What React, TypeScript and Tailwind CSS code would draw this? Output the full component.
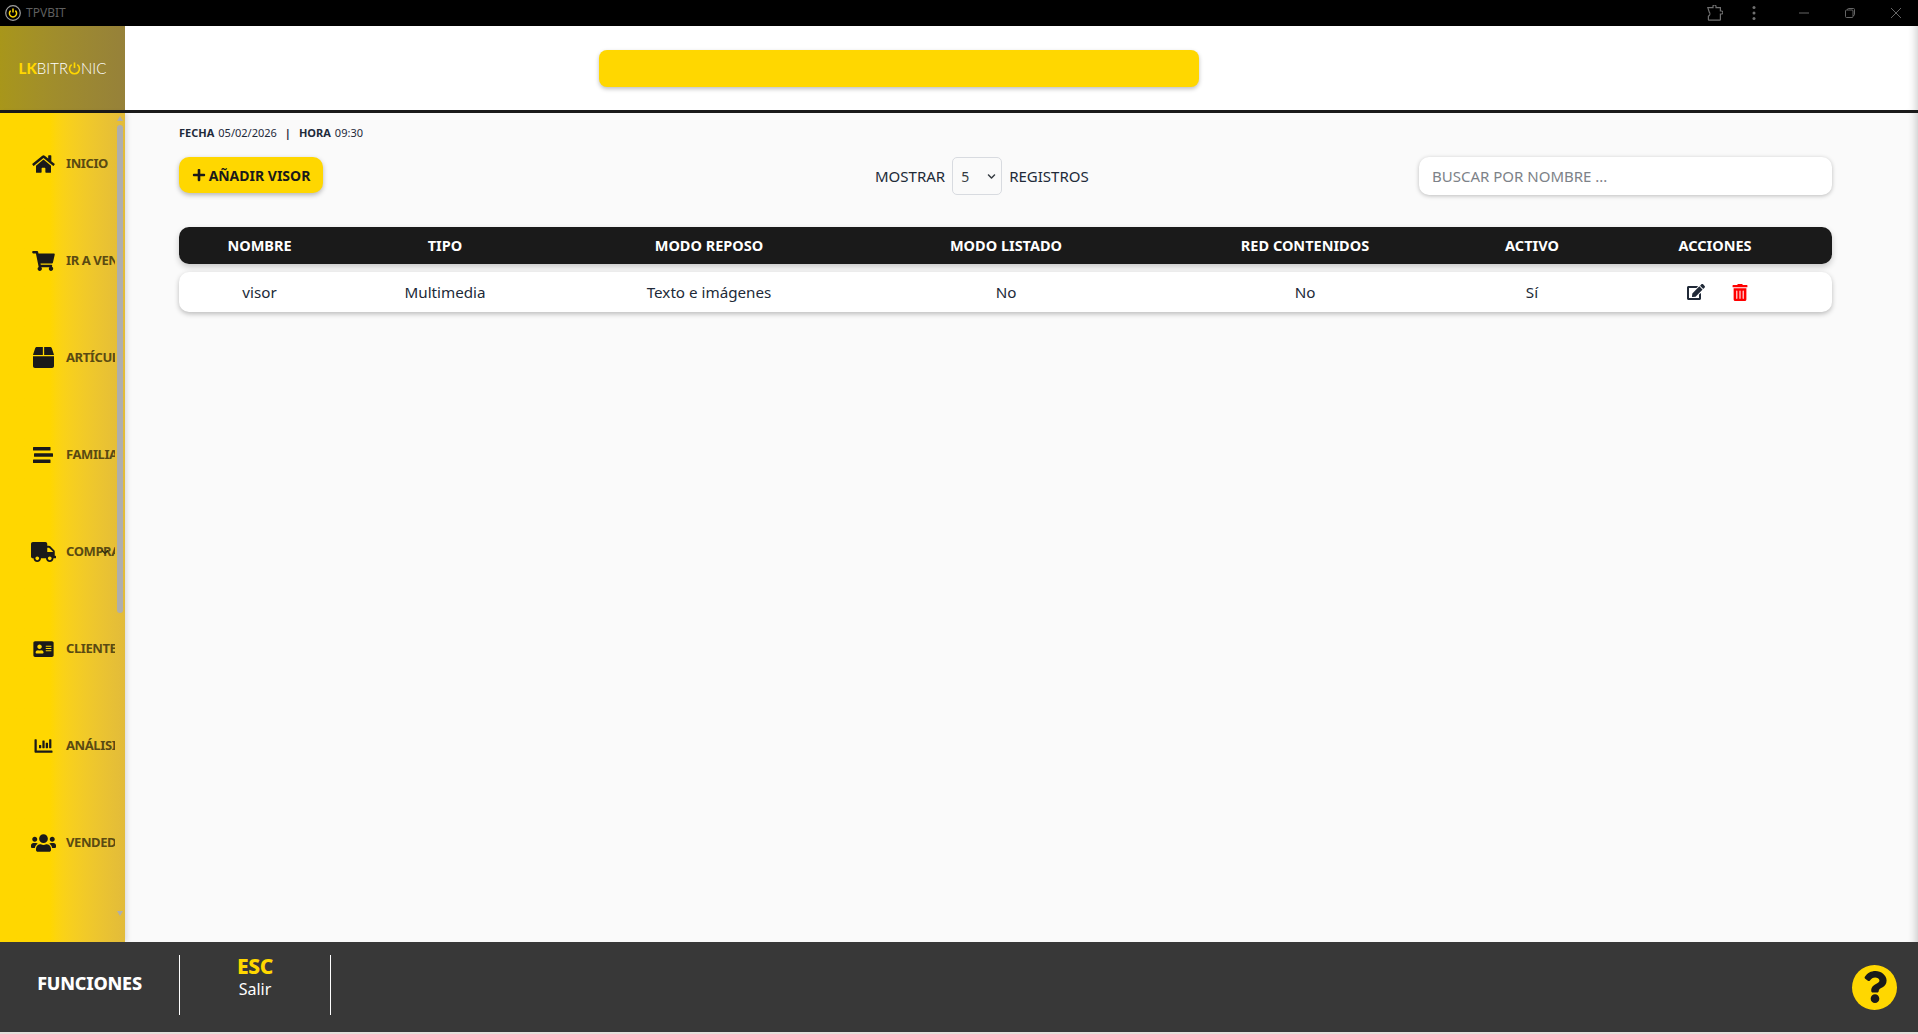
import { FaHome, FaShoppingCart, FaBox, FaTruck, FaAddressCard, FaChartBar, FaUsers, FaEdit, FaTrashAlt, FaPlus, FaQuestion, FaChevronDown } from "react-icons/fa";

const font = "[font-family:'Noto_Sans',sans-serif]";

function FamiliaIcon({ className }: { className?: string }) {
  return (
    <svg viewBox="0 0 20 16" className={className} fill="currentColor">
      <rect x="0" y="0" width="17.5" height="3.6" rx="0.5" />
      <rect x="1" y="6.2" width="19" height="3.6" rx="0.5" />
      <rect x="0" y="12.4" width="17.5" height="3.6" rx="0.5" />
    </svg>
  );
}

const menu = [
  { label: "INICIO", icon: <FaHome className="w-[23px] h-[20px]" /> },
  { label: "IR A VENTA", icon: <FaShoppingCart className="w-[23px] h-[20px]" /> },
  { label: "ARTÍCULOS", icon: <FaBox className="w-[21px] h-[21px]" /> },
  { label: "FAMILIAS", icon: <FamiliaIcon className="w-[20px] h-[16px]" /> },
  { label: "COMPRAS", icon: <FaTruck className="w-[25px] h-[20px]" /> },
  { label: "CLIENTES", icon: <FaAddressCard className="w-[23px] h-[18px]" /> },
  { label: "ANÁLISIS", icon: <FaChartBar className="w-[21px] h-[18px]" /> },
  { label: "VENDEDORES", icon: <FaUsers className="w-[25px] h-[20px]" /> },
];

const columns = ["NOMBRE", "TIPO", "MODO REPOSO", "MODO LISTADO", "RED CONTENIDOS", "ACTIVO", "ACCIONES"];
const row = ["visor", "Multimedia", "Texto e imágenes", "No", "No", "Sí"];
const gridCols = "grid grid-cols-[161px_210px_318px_276px_322px_132px_1fr]";

function TitleBar() {
  return (
    <div className="h-[26px] shrink-0 bg-black flex items-center justify-between">
      <div className="flex items-center pl-[5px] gap-[5px]">
        <svg viewBox="0 0 16 16" className="w-[16px] h-[16px]" fill="none">
          <circle cx="8" cy="8" r="7.3" stroke="#a0a0a0" strokeWidth="1.2" />
          <path d="M5.6 5.6a3.6 3.6 0 1 0 4.8 0" stroke="#ffd700" strokeWidth="1.5" />
          <path d="M8 3.6v4" stroke="#ffd700" strokeWidth="1.5" />
        </svg>
        <span className="text-[12px] text-[#5f5f5f]">TPVBIT</span>
      </div>
      <div className="flex items-center text-[#707070]">
        <svg viewBox="0 0 16 16" className="w-[16px] h-[16px] mr-[29px]" fill="none" stroke="currentColor" strokeWidth="1.2">
          <path d="M.8 2.6H6V1.4a1.4 1.4 0 0 1 3 0v1.2h4.4v3.4h1a1.5 1.5 0 0 1 0 3h-1v5.4a.8.8 0 0 1-.8.8H2.2a.8.8 0 0 1-.8-.8v-3.2l.8-.6c.9-.9.9-2.7 0-3.6z" />
        </svg>
        <svg viewBox="0 0 4 16" className="w-[4px] h-[16px] mr-[43px]" fill="currentColor">
          <circle cx="2" cy="2.5" r="1.5" />
          <circle cx="2" cy="8" r="1.5" />
          <circle cx="2" cy="13.5" r="1.5" />
        </svg>
        <svg viewBox="0 0 10 10" className="w-[10px] h-[10px] mr-[36px]" fill="none" stroke="currentColor" strokeWidth="0.9">
          <path d="M0 5h10" />
        </svg>
        <svg viewBox="0 0 10 10" className="w-[10px] h-[10px] mr-[36px]" fill="none" stroke="currentColor" strokeWidth="0.9">
          <rect x="0.5" y="2" width="7.5" height="7.5" rx="1" />
          <path d="M2.5 2V1.5a1 1 0 0 1 1-1H8.5a1 1 0 0 1 1 1v5a1 1 0 0 1-1 1H8" />
        </svg>
        <svg viewBox="0 0 10 10" className="w-[10px] h-[10px] mr-[17px]" fill="none" stroke="currentColor" strokeWidth="0.9">
          <path d="M0 0l10 10M10 0L0 10" />
        </svg>
      </div>
    </div>
  );
}

function Logo() {
  return (
    <div className="w-[125px] shrink-0 bg-gradient-to-r from-[#a8961a] to-[#968139] flex items-center justify-center">
      <div className="flex items-center text-[15px] leading-none text-white font-light [font-family:Lato,sans-serif]">
        <span className="font-black text-[#ffd700]">LK</span>
        <span>BITR</span>
        <svg viewBox="0 0 14 14" className="w-[13px] h-[13px]" fill="none" stroke="#ffd700" strokeWidth="1.8">
          <path d="M4 2.8a5.4 5.4 0 1 0 6 0" />
          <path d="M7 0.5v6" />
        </svg>
        <span>NIC</span>
      </div>
    </div>
  );
}

function Sidebar() {
  return (
    <aside className="relative w-[125px] shrink-0 flex bg-gradient-to-r from-[#ffd700] from-40% to-[#e2bb3a] shadow-[2px_0_5px_rgba(0,0,0,0.12)] z-10">
      <nav className="w-[115px] overflow-hidden pt-[2px]">
        {menu.map((m) => (
          <div key={m.label} className="relative h-[97px] flex items-center">
            <div className="w-[66px] shrink-0 pl-[28px] pr-[8px] flex justify-center text-[#1a1a1a]">{m.icon}</div>
            <span className="text-[13px] font-bold tracking-[-0.4px] whitespace-nowrap text-[#5a4a12]">{m.label}</span>
            {m.label === "COMPRAS" && <FaChevronDown className="absolute left-[100px] top-[45px] w-[10px] h-[8px] text-[#2a2a10]" />}
          </div>
        ))}
      </nav>
      <div className="w-[6px] ml-[2px] flex flex-col items-center pt-[3px] pb-[26px]">
        <div className="w-0 h-0 border-x-[3px] border-x-transparent border-b-[5px] border-b-[#aeaeae]" />
        <div className="w-[6px] h-[488px] mt-[4px] rounded-[3px] bg-[#aeaeae]" />
        <div className="flex-1" />
        <div className="w-0 h-0 border-x-[3px] border-x-transparent border-t-[5px] border-t-[#aeaeae]" />
      </div>
    </aside>
  );
}

function Toolbar() {
  return (
    <div className="relative flex items-start justify-between h-[38px]">
      <button className="w-[144px] h-[36px] rounded-[10px] bg-[#ffd700] text-[#1a1a1a] text-[14px] font-bold flex items-center justify-center gap-[3px] shadow-[0_2px_5px_rgba(0,0,0,0.28)]">
        <FaPlus className="w-[14px] h-[14px]" />
        AÑADIR VISOR
      </button>
      <div className="absolute left-[696px] top-0 h-[38px] flex items-center gap-[7px] text-[15px] text-[#212a38]">
        <span>MOSTRAR</span>
        <div className="relative w-[50px] h-[38px]">
          <select defaultValue="5" className="w-full h-full appearance-none rounded-[5px] border border-[#d8dbe0] bg-[#fafafa] pl-[8px] text-[14px] text-[#343a40]">
            <option value="5">5</option>
            <option value="10">10</option>
          </select>
          <FaChevronDown className="absolute right-[5px] top-[15px] w-[11px] h-[9px] text-[#343a40] pointer-events-none" />
        </div>
        <span>REGISTROS</span>
      </div>
      <input
        placeholder="BUSCAR POR NOMBRE ..."
        className="w-[413px] h-[38px] rounded-[10px] bg-white px-[13px] text-[15px] outline-none placeholder:text-[#7d8288] shadow-[0_1px_4px_rgba(0,0,0,0.25)]"
      />
    </div>
  );
}

function VisorTable() {
  return (
    <div className="mt-[32px]">
      <div className={`${gridCols} h-[37px] items-center rounded-[10px] bg-[#1a1a1a] text-white text-[14.5px] font-bold text-center shadow-[0_3px_6px_rgba(0,0,0,0.2)]`}>
        {columns.map((c) => (
          <span key={c}>{c}</span>
        ))}
      </div>
      <div className={`${gridCols} mt-[8px] h-[40px] items-center rounded-[10px] bg-white text-[15.2px] text-[#212a38] text-center shadow-[0_2px_5px_rgba(0,0,0,0.25)]`}>
        {row.map((c, i) => (
          <span key={i}>{c}</span>
        ))}
        <div className="flex justify-center gap-[27px] pl-[5px]">
          <FaEdit className="w-[18px] h-[16px] text-[#212a38]" />
          <FaTrashAlt className="w-[16px] h-[17px] text-[#ff0000]" />
        </div>
      </div>
    </div>
  );
}

function Footer() {
  return (
    <footer className="h-[90px] shrink-0 bg-[#383838] flex items-center text-white relative z-20">
      <div className="w-[179px] text-center pb-[8px] text-[18px] font-extrabold tracking-[-0.2px]">FUNCIONES</div>
      <div className="w-[152px] h-[60px] border-x border-white flex flex-col items-center justify-start -translate-y-[2px]">
        <span className="text-[21px] font-extrabold leading-[22px] tracking-[-0.3px] text-[#ffd700]">ESC</span>
        <span className="text-[16px] leading-[24px]">Salir</span>
      </div>
      <div className="ml-auto mr-[21px] w-[45px] h-[45px] rounded-full bg-[#ffd700] flex items-center justify-center">
        <FaQuestion className="w-[26px] h-[32px] text-[#1a1a1a]" />
      </div>
    </footer>
  );
}

export default function App() {
  return (
    <div className={`h-screen flex flex-col overflow-hidden bg-[#e4dfdb] ${font}`}>
      <TitleBar />
      <header className="h-[84px] shrink-0 flex bg-white">
        <Logo />
        <div className="flex-1 pt-[24px] pl-[474px] shadow-[inset_-10px_0_8px_-8px_rgba(0,0,0,0.2)]">
          <div className="w-[600px] h-[37px] rounded-[8px] bg-[#ffd700] shadow-[0_2px_4px_rgba(0,0,0,0.25)]" />
        </div>
      </header>
      <div className="h-[3px] shrink-0 bg-[#1a1a1a]" />
      <div className="flex-1 min-h-0 flex">
        <Sidebar />
        <main className="flex-1 bg-[#fafafa] pl-[54px] pr-[86px] pt-[11px] shadow-[inset_-10px_0_8px_-8px_rgba(0,0,0,0.2)]">
          <div className="h-[16px] flex items-center text-[11px] leading-none text-[#1e2a3a] mb-[17px]">
            <b>FECHA</b>
            <span className="ml-[4px]">05/02/2026</span>
            <span className="mx-[8px] font-bold">|</span>
            <b>HORA</b>
            <span className="ml-[4px]">09:30</span>
          </div>
          <Toolbar />
          <VisorTable />
        </main>
      </div>
      <Footer />
      <div className="h-[2px] shrink-0" />
    </div>
  );
}
